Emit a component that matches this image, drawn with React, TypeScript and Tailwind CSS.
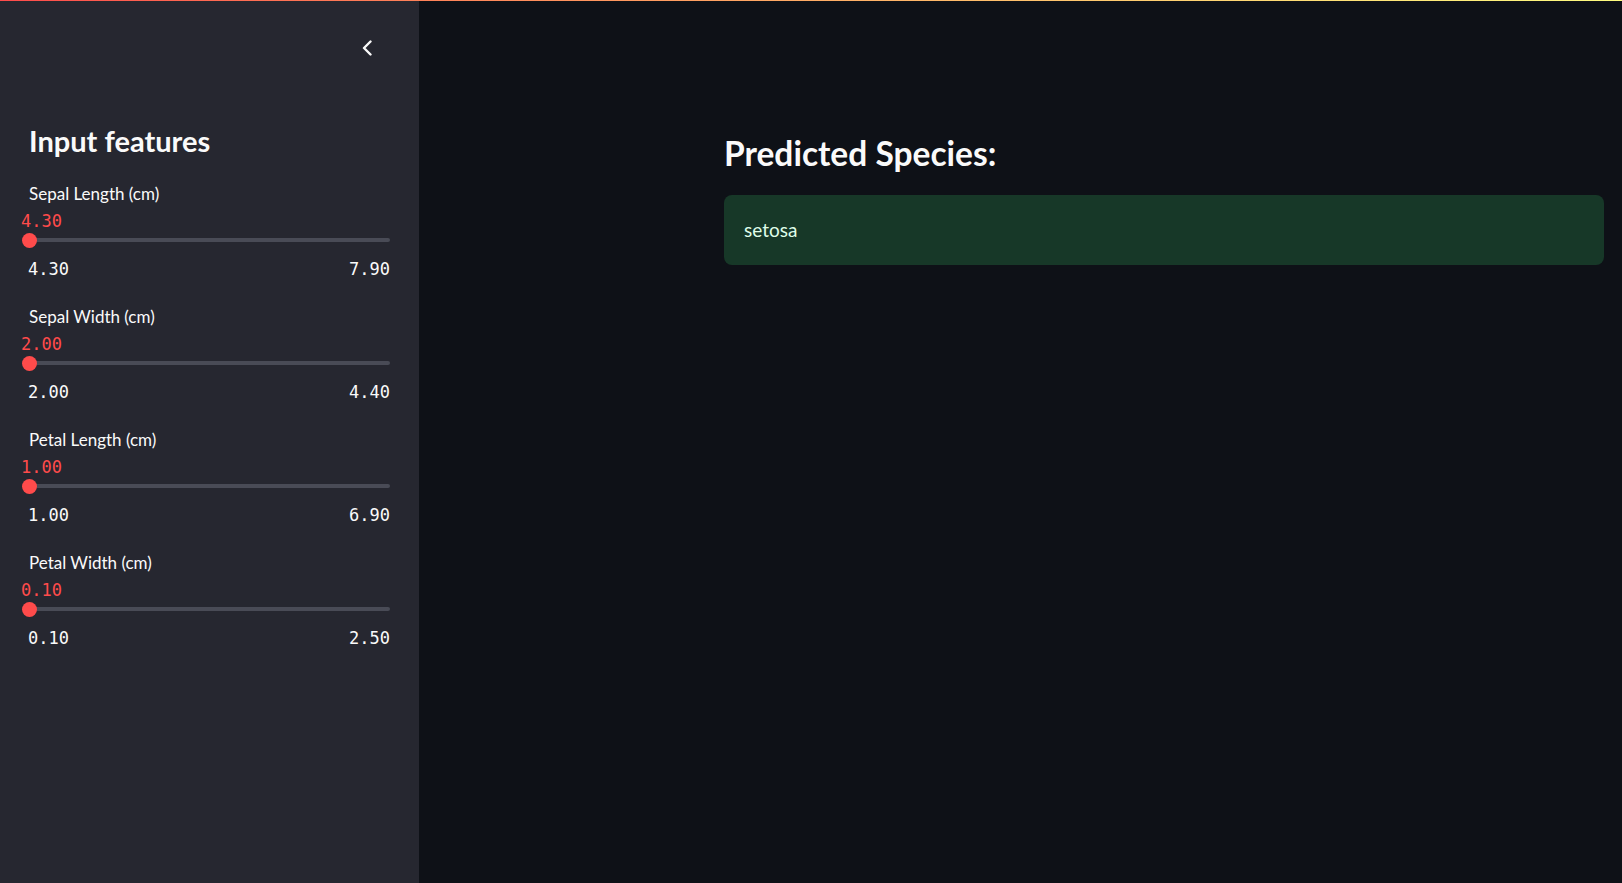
import { FC } from "react";

interface IFeature {
  label: string;
  value: string;
  min: string;
  max: string;
}

const features: IFeature[] = [
  { label: "Sepal Length (cm)", value: "4.30", min: "4.30", max: "7.90" },
  { label: "Sepal Width (cm)", value: "2.00", min: "2.00", max: "4.40" },
  { label: "Petal Length (cm)", value: "1.00", min: "1.00", max: "6.90" },
  { label: "Petal Width (cm)", value: "0.10", min: "0.10", max: "2.50" },
];

const Slider: FC<IFeature> = ({ label, value, min, max }) => (
  <div className="flex flex-col">
    <span className="pl-[1px] text-[17px] leading-[24px] text-[#fafafa]">{label}</span>
    <span className="mt-[4px] -ml-[7px] font-['DejaVu_Sans_Mono',monospace] text-[17px] leading-[22px] text-[#ff4b4b]">
      {value}
    </span>
    <div className="relative h-[16px] flex items-center">
      <div className="h-[4px] w-full rounded-full bg-[#494b56]" />
      <div className="absolute -left-[6px] top-[0.5px] h-[15px] w-[15px] rounded-full bg-[#ff4b4b]" />
    </div>
    <div className="mt-[9px] flex justify-between font-['DejaVu_Sans_Mono',monospace] text-[17px] leading-[24px] text-[#fafafa]">
      <span>{min}</span>
      <span>{max}</span>
    </div>
  </div>
);

const App: FC = () => {
  return (
    <div className="relative flex h-screen w-full overflow-hidden font-[Lato,sans-serif]">
      {/* decoration line */}
      <div className="absolute left-0 right-0 top-0 h-px bg-gradient-to-r from-[#ff4b4b] to-[#fffd80]" />

      <aside className="flex w-[419px] shrink-0 flex-col bg-[#262730] pl-[28px] pr-[29px]">
        <div className="flex h-[28px] mt-[34px] items-center justify-end pr-[17px]">
          <svg width="12" height="16" viewBox="0 0 12 16" fill="none">
            <path
              d="M9.5 1.5 L3 8 L9.5 14.5"
              stroke="#fafafa"
              strokeWidth="2.4"
              strokeLinecap="round"
              strokeLinejoin="round"
            />
          </svg>
        </div>
        <h2 className="mt-[61px] pl-[1px] text-[29px] leading-[36px] font-bold text-[#fafafa]">
          Input features
        </h2>
        <div className="mt-[23px] flex flex-col gap-[24px]">
          {features.map((f) => (
            <Slider key={f.label} {...f} />
          ))}
        </div>
      </aside>

      <main className="flex-1 bg-[#0e1117] pl-[305px] pt-[131px]">
        <h1 className="text-[33.5px] leading-[44px] font-bold text-[#fafafa]">
          Predicted Species:
        </h1>
        <div className="mt-[20px] w-[880px] rounded-[8px] bg-[#173828] px-[20px] py-[21px]">
          <span className="text-[19px] leading-[28px] text-[#dffde9]">setosa</span>
        </div>
      </main>
    </div>
  );
};

export default App;
